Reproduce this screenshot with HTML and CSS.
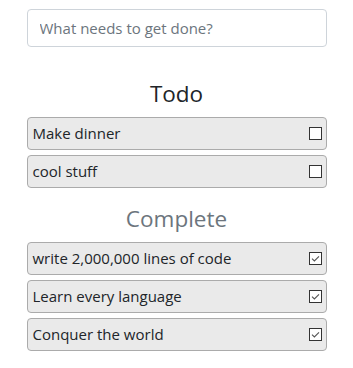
FILE: index.html
```html
<!DOCTYPE html>
<html lang="en">
<head>
<meta charset="utf-8">
<title>Todo</title>
<link rel="stylesheet" href="styles.css">
</head>
<body>
<main class="app">
  <input class="new-todo" type="text" placeholder="What needs to get done?">

  <h4 class="section-title">Todo</h4>
  <ul class="todo-list">
    <li class="todo-item"><span class="todo-text">Make dinner</span><span class="check"></span></li>
    <li class="todo-item"><span class="todo-text">cool stuff</span><span class="check"></span></li>
  </ul>

  <h4 class="section-title muted">Complete</h4>
  <ul class="todo-list">
    <li class="todo-item"><span class="todo-text">write 2,000,000 lines of code</span><span class="check checked"><svg viewBox="0 0 13 13" width="13" height="13"><path d="M3 6.6 L5.4 9 L10 4.3" fill="none" stroke="#555" stroke-width="1.1"/></svg></span></li>
    <li class="todo-item"><span class="todo-text">Learn every language</span><span class="check checked"><svg viewBox="0 0 13 13" width="13" height="13"><path d="M3 6.6 L5.4 9 L10 4.3" fill="none" stroke="#555" stroke-width="1.1"/></svg></span></li>
    <li class="todo-item"><span class="todo-text">Conquer the world</span><span class="check checked"><svg viewBox="0 0 13 13" width="13" height="13"><path d="M3 6.6 L5.4 9 L10 4.3" fill="none" stroke="#555" stroke-width="1.1"/></svg></span></li>
  </ul>
</main>
</body>
</html>
```

FILE: styles.css
```css
* { box-sizing: border-box; }

html, body {
  margin: 0;
  padding: 0;
  background: #fff;
}

body {
  font-family: "Open Sans", "Noto Sans", "Liberation Sans", sans-serif;
  font-size: 15px;
  color: #212529;
}

.app {
  width: 300px;
  margin: 9px auto 0;
}

.new-todo {
  display: block;
  width: 100%;
  height: 38px;
  padding: 6px 12px;
  border: 1px solid #ced4da;
  border-radius: 4px;
  font-family: inherit;
  font-size: 15px;
  color: #495057;
  background: #fff;
  outline: none;
}

.new-todo::placeholder {
  color: #6c757d;
}

.section-title {
  margin: 33px 0 8px;
  font-size: 22.5px;
  font-weight: 400;
  line-height: 28.8px;
  text-align: center;
  color: #212529;
}

.section-title.muted {
  margin-top: 17px;
  color: #6c757d;
}

.todo-list {
  list-style: none;
  margin: 0;
  padding: 0;
  display: flex;
  flex-direction: column;
  gap: 5px;
}

.todo-item {
  display: flex;
  align-items: center;
  justify-content: space-between;
  height: 33px;
  padding: 0 4px 0 5px;
  background: #eaeaea;
  border: 1px solid #ababab;
  border-radius: 4px;
}

.todo-text {
  white-space: nowrap;
}

.check {
  display: block;
  width: 13px;
  height: 13px;
  border: 1px solid #333;
  background: #fff;
  position: relative;
}

.check svg {
  position: absolute;
  left: -1px;
  top: -1px;
}
```
